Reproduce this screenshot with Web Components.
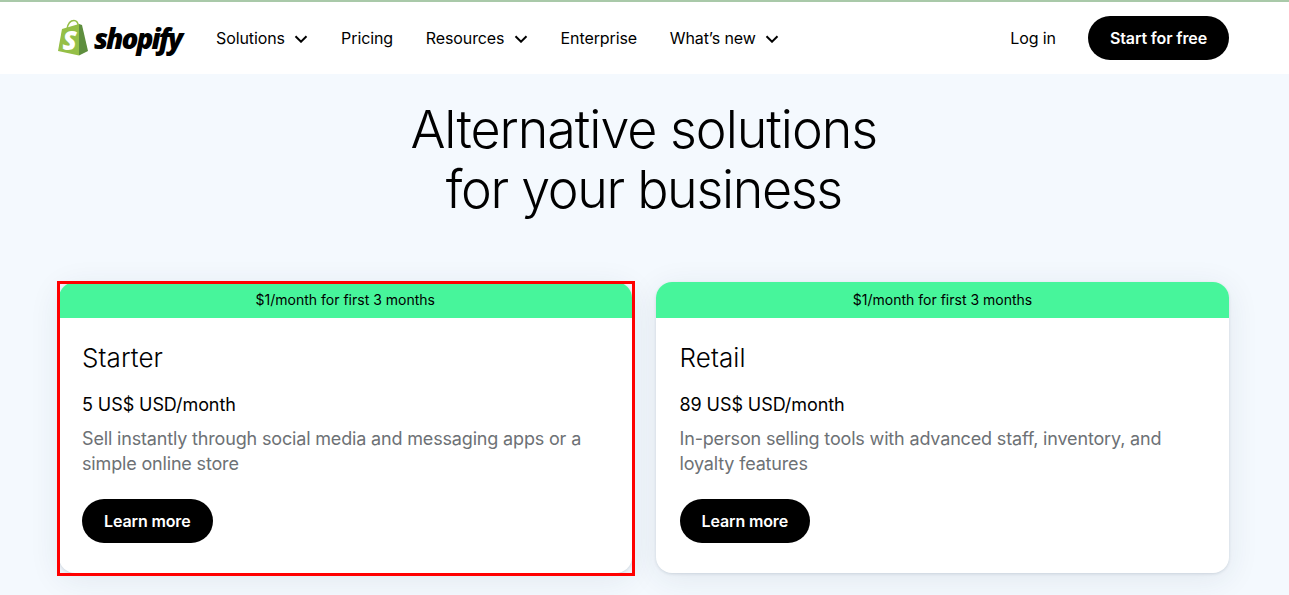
<!DOCTYPE html>
<html lang="en">
<head>
<meta charset="utf-8">
<title>Alternative solutions</title>
<style>
  html, body { margin: 0; height: 100%; overflow: hidden; }
  body { background: #f4f9fe; color: #000; font-family: Inter, "Liberation Sans", sans-serif; }
</style>
</head>
<body>
<site-header>
  <nav-item caret>Solutions</nav-item>
  <nav-item>Pricing</nav-item>
  <nav-item caret>Resources</nav-item>
  <nav-item>Enterprise</nav-item>
  <nav-item caret>What’s new</nav-item>
</site-header>
<plan-section heading-one="Alternative solutions" heading-two="for your business">
  <plan-card name="Starter" price="5 US$ USD/month" flagged>Sell instantly through social media and messaging apps or a simple online store</plan-card>
  <plan-card name="Retail" price="89 US$ USD/month">In-person selling tools with advanced staff, inventory, and loyalty features</plan-card>
</plan-section>

<script>
class PillButton extends HTMLElement {
  constructor() {
    super();
    this.attachShadow({ mode: 'open' }).innerHTML = `
    <style>
      :host {
        display: inline-flex;
        align-items: center;
        height: 44px;
        padding: 0 22px;
        border-radius: 22px;
        background: #000;
        color: #fff;
        font-size: 16px;
        font-weight: 600;
        letter-spacing: -.12px;
      }
    </style>
    <slot></slot>`;
  }
}

class NavItem extends HTMLElement {
  constructor() {
    super();
    const caret = this.hasAttribute('caret') ? `
      <svg viewBox="0 0 14 8" width="14" height="8">
        <path d="M1.500 1.200 L7 6.700 L12.500 1.200" fill="none" stroke="#000" stroke-width="2"/>
      </svg>` : '';
    this.attachShadow({ mode: 'open' }).innerHTML = `
    <style>
      :host {
        display: inline-flex;
        align-items: center;
        gap: 9.500px;
        font-size: 16px;
        letter-spacing: -.1px;
        color: #000;
      }
      svg { margin-top: 2px; }
    </style>
    <slot></slot>${caret}`;
  }
}

class SiteHeader extends HTMLElement {
  constructor() {
    super();
    this.attachShadow({ mode: 'open' }).innerHTML = `
    <style>
      :host {
        display: flex;
        align-items: center;
        box-sizing: border-box;
        height: 74px;
        padding: 0 60px 0 58px;
        background: #fff;
        border-top: 2px solid #a9c9a9;
      }
      .logo { display: flex; align-items: center; gap: 3px; width: 158px; }
      .logo span {
        font: italic 800 28px "Open Sans", sans-serif;
        letter-spacing: -2px;
        line-height: 36px;
      }
      .logo text { font: italic 800 26px "Open Sans", sans-serif; fill: #fff; }
      nav { display: flex; gap: 32.700px; align-items: center; }
      .right { margin-left: auto; display: flex; gap: 32px; align-items: center; font-size: 16px; letter-spacing: -.1px; }
    </style>
    <div class="logo">
      <svg viewBox="0 0 33 38" width="33" height="38">
        <path d="M21 5 L4 10 L0 32 L21 36.500 Z" fill="#95bf47"/>
        <path d="M21 5 L24 6 L30 32 L21 36.500 Z" fill="#5e8e3e"/>
        <path d="M9 10 C10 4 13 1.500 16 1.500 C19 1.500 20 4 20.500 7" fill="none" stroke="#95bf47" stroke-width="1.500"/>
        <text x="4.500" y="31">S</text>
      </svg>
      <span>shopify</span>
    </div>
    <nav><slot></slot></nav>
    <div class="right">
      <span>Log in</span>
      <pill-button>Start for free</pill-button>
    </div>`;
  }
}

class PlanCard extends HTMLElement {
  constructor() {
    super();
    const name = this.getAttribute('name');
    const price = this.getAttribute('price');
    const flag = this.hasAttribute('flagged') ? '<div class="flag"></div>' : '';
    this.attachShadow({ mode: 'open' }).innerHTML = `
    <style>
      :host {
        display: flex;
        flex-direction: column;
        position: relative;
        height: 291px;
        background: #fff;
        border-radius: 16px;
        box-shadow: 0 1px 3px rgba(30, 50, 80, .14), 0 6px 32px rgba(30, 50, 80, .09);
      }
      .promo {
        box-sizing: border-box;
        height: 36px;
        padding-bottom: 2px;
        display: flex;
        align-items: center;
        justify-content: center;
        background: #47f59b;
        border-radius: 16px 16px 0 0;
        font-size: 14px;
      }
      .body { padding: 24px 23.500px; display: flex; flex-direction: column; align-items: flex-start; }
      h3 { margin: 0; font-size: 26px; font-weight: 350; line-height: 32px; letter-spacing: .1px; }
      .price { margin-top: 18px; font-size: 18px; line-height: 26px; letter-spacing: -.08px; }
      .desc { margin-top: 8px; font-size: 18px; line-height: 25px; letter-spacing: -.165px; color: #6d7175; }
      pill-button { margin-top: 23px; }
      .flag { position: absolute; left: -1.500px; top: -1px; right: -3px; bottom: -3px; border: 3px solid #f00; }
    </style>
    <div class="promo">$1/month for first 3 months</div>
    <div class="body">
      <h3>${name}</h3>
      <div class="price">${price}</div>
      <div class="desc"><slot></slot></div>
      <pill-button>Learn more</pill-button>
    </div>
    ${flag}`;
  }
}

class PlanSection extends HTMLElement {
  constructor() {
    super();
    this.attachShadow({ mode: 'open' }).innerHTML = `
    <style>
      :host { display: block; padding: 26px 60px 0 58.500px; }
      h2 {
        margin: 0 0 62px;
        text-align: center;
        font-size: 52px;
        font-weight: 300;
        line-height: 60px;
        letter-spacing: -1.030px;
      }
      h2 span { letter-spacing: -1.330px; }
      .grid { display: grid; grid-template-columns: 573.500px 573px; gap: 24px; }
    </style>
    <h2>${this.getAttribute('heading-one')}<br><span>${this.getAttribute('heading-two')}</span></h2>
    <div class="grid"><slot></slot></div>`;
  }
}

customElements.define('pill-button', PillButton);
customElements.define('nav-item', NavItem);
customElements.define('site-header', SiteHeader);
customElements.define('plan-card', PlanCard);
customElements.define('plan-section', PlanSection);
</script>
</body>
</html>
